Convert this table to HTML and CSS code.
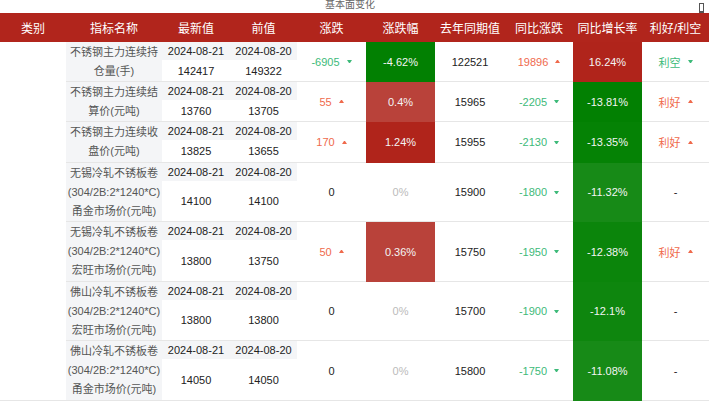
FILE: index.html
```html
<!DOCTYPE html>
<html lang="zh-CN">
<head>
<meta charset="utf-8">
<title>基本面变化</title>
<link rel="stylesheet" href="styles.css">
</head>
<body>
<div class="page">
  <div class="title">基本面变化</div>
  <span class="corner-icon"></span>
  <div class="tbl">
    <div class="th">类别</div>
    <div class="th">指标名称</div>
    <div class="th">最新值</div>
    <div class="th">前值</div>
    <div class="th">涨跌</div>
    <div class="th">涨跌幅</div>
    <div class="th">去年同期值</div>
    <div class="th">同比涨跌</div>
    <div class="th">同比增长率</div>
    <div class="th">利好/利空</div>
    <div class="cat"></div>

    <div class="nm">不锈钢主力连续持<br>仓量(手)</div>
    <div class="dt">2024-08-21</div>
    <div class="dt">2024-08-20</div>
    <div class="sp"><span class="gr">-6905</span><i class="tri dn"></i></div>
    <div class="sp bg g-a">-4.62%</div>
    <div class="sp">122521</div>
    <div class="sp"><span class="rd">19896</span><i class="tri up"></i></div>
    <div class="sp bg r-a">16.24%</div>
    <div class="sp"><span class="gr">利空</span><i class="tri dn"></i></div>
    <div class="vl">142417</div>
    <div class="vl">149322</div>

    <div class="nm">不锈钢主力连续结<br>算价(元吨)</div>
    <div class="dt">2024-08-21</div>
    <div class="dt">2024-08-20</div>
    <div class="sp"><span class="rd">55</span><i class="tri up"></i></div>
    <div class="sp bg r-b">0.4%</div>
    <div class="sp">15965</div>
    <div class="sp"><span class="gr">-2205</span><i class="tri dn"></i></div>
    <div class="sp bg g-a">-13.81%</div>
    <div class="sp"><span class="rd">利好</span><i class="tri up"></i></div>
    <div class="vl">13760</div>
    <div class="vl">13705</div>

    <div class="nm">不锈钢主力连续收<br>盘价(元吨)</div>
    <div class="dt">2024-08-21</div>
    <div class="dt">2024-08-20</div>
    <div class="sp"><span class="rd">170</span><i class="tri up"></i></div>
    <div class="sp bg r-a">1.24%</div>
    <div class="sp">15955</div>
    <div class="sp"><span class="gr">-2130</span><i class="tri dn"></i></div>
    <div class="sp bg g-b">-13.35%</div>
    <div class="sp"><span class="rd">利好</span><i class="tri up"></i></div>
    <div class="vl">13825</div>
    <div class="vl">13655</div>

    <div class="nm">无锡冷轧不锈板卷<br>(304/2B:2*1240*C)<br>甬金市场价(元吨)</div>
    <div class="dt">2024-08-21</div>
    <div class="dt">2024-08-20</div>
    <div class="sp">0</div>
    <div class="sp zero">0%</div>
    <div class="sp">15900</div>
    <div class="sp"><span class="gr">-1800</span><i class="tri dn"></i></div>
    <div class="sp bg g-e">-11.32%</div>
    <div class="sp">-</div>
    <div class="vl">14100</div>
    <div class="vl">14100</div>

    <div class="nm">无锡冷轧不锈板卷<br>(304/2B:2*1240*C)<br>宏旺市场价(元吨)</div>
    <div class="dt">2024-08-21</div>
    <div class="dt">2024-08-20</div>
    <div class="sp"><span class="rd">50</span><i class="tri up"></i></div>
    <div class="sp bg r-b">0.36%</div>
    <div class="sp">15750</div>
    <div class="sp"><span class="gr">-1950</span><i class="tri dn"></i></div>
    <div class="sp bg g-c">-12.38%</div>
    <div class="sp"><span class="rd">利好</span><i class="tri up"></i></div>
    <div class="vl">13800</div>
    <div class="vl">13750</div>

    <div class="nm">佛山冷轧不锈板卷<br>(304/2B:2*1240*C)<br>宏旺市场价(元吨)</div>
    <div class="dt">2024-08-21</div>
    <div class="dt">2024-08-20</div>
    <div class="sp">0</div>
    <div class="sp zero">0%</div>
    <div class="sp">15700</div>
    <div class="sp"><span class="gr">-1900</span><i class="tri dn"></i></div>
    <div class="sp bg g-d">-12.1%</div>
    <div class="sp">-</div>
    <div class="vl">13800</div>
    <div class="vl">13800</div>

    <div class="nm">佛山冷轧不锈板卷<br>(304/2B:2*1240*C)<br>甬金市场价(元吨)</div>
    <div class="dt">2024-08-21</div>
    <div class="dt">2024-08-20</div>
    <div class="sp">0</div>
    <div class="sp zero">0%</div>
    <div class="sp">15800</div>
    <div class="sp"><span class="gr">-1750</span><i class="tri dn"></i></div>
    <div class="sp bg g-e">-11.08%</div>
    <div class="sp">-</div>
    <div class="vl">14050</div>
    <div class="vl">14050</div>
  </div>
</div>
</body>
</html>
```

FILE: styles.css
```css
html, body {
  margin: 0;
  padding: 0;
  background: #fff;
}
body {
  font-family: "Liberation Sans", "Noto Sans CJK SC", sans-serif;
  font-size: 11px;
  color: #222;
}
.page {
  position: relative;
  width: 713px;
}
.title {
  width: 700px;
  height: 13px;
  line-height: 10px;
  font-size: 10px;
  color: #666;
  text-align: center;
}
.corner-icon {
  position: absolute;
  left: 699px;
  top: 3px;
  width: 5px;
  height: 10px;
  box-sizing: border-box;
  border: 1px solid #555;
  border-bottom-width: 2px;
}
.tbl {
  display: grid;
  width: 709px;
  grid-template-columns: 66px 96px 68px 67px 69px 69px 70px 68px 69px 67px;
  grid-template-rows: 29px 18px 22px 18px 22px 18px 23px 18px 41px 18px 42px 18px 41px 18px 42px;
}
.tbl > div {
  box-sizing: border-box;
  display: flex;
  align-items: center;
  justify-content: center;
  text-align: center;
  white-space: nowrap;
}
.th {
  background: #b1251c;
  color: #fff;
  font-size: 12px;
}
.cat {
  grid-column: 1;
  grid-row: 2 / 16;
  border-bottom: 1px solid #e6e6e6;
}
.nm {
  grid-row: span 2;
  background: #f4f5f7;
  color: #555;
  line-height: 19px;
  border-bottom: 1px solid #e6e6e6;
}
.dt {
  background: #f4f5f7;
}
.vl {
  border-bottom: 1px solid #e6e6e6;
}
.sp {
  grid-row: span 2;
  border-bottom: 1px solid #e6e6e6;
}
.bg {
  color: #f4f4f4;
  border-bottom-color: transparent !important;
}
.g-a { background: #028002; }
.g-b { background: #058205; }
.g-c { background: #0b850b; }
.g-d { background: #0e860e; }
.g-e { background: #178a17; }
.r-a { background: #b0241b; }
.r-b { background: #b9423a; }
.zero { color: #bbb; }
.gr { color: #3dba79; }
.rd { color: #ef6a4c; }
.tri {
  display: inline-block;
  width: 1px;
  height: 0;
  margin-left: 7px;
  border-left: 2px solid transparent;
  border-right: 2px solid transparent;
}
.tri.dn { border-top: 3px solid #3dba79; }
.tri.up { border-bottom: 3px solid #ef6a4c; }
```
